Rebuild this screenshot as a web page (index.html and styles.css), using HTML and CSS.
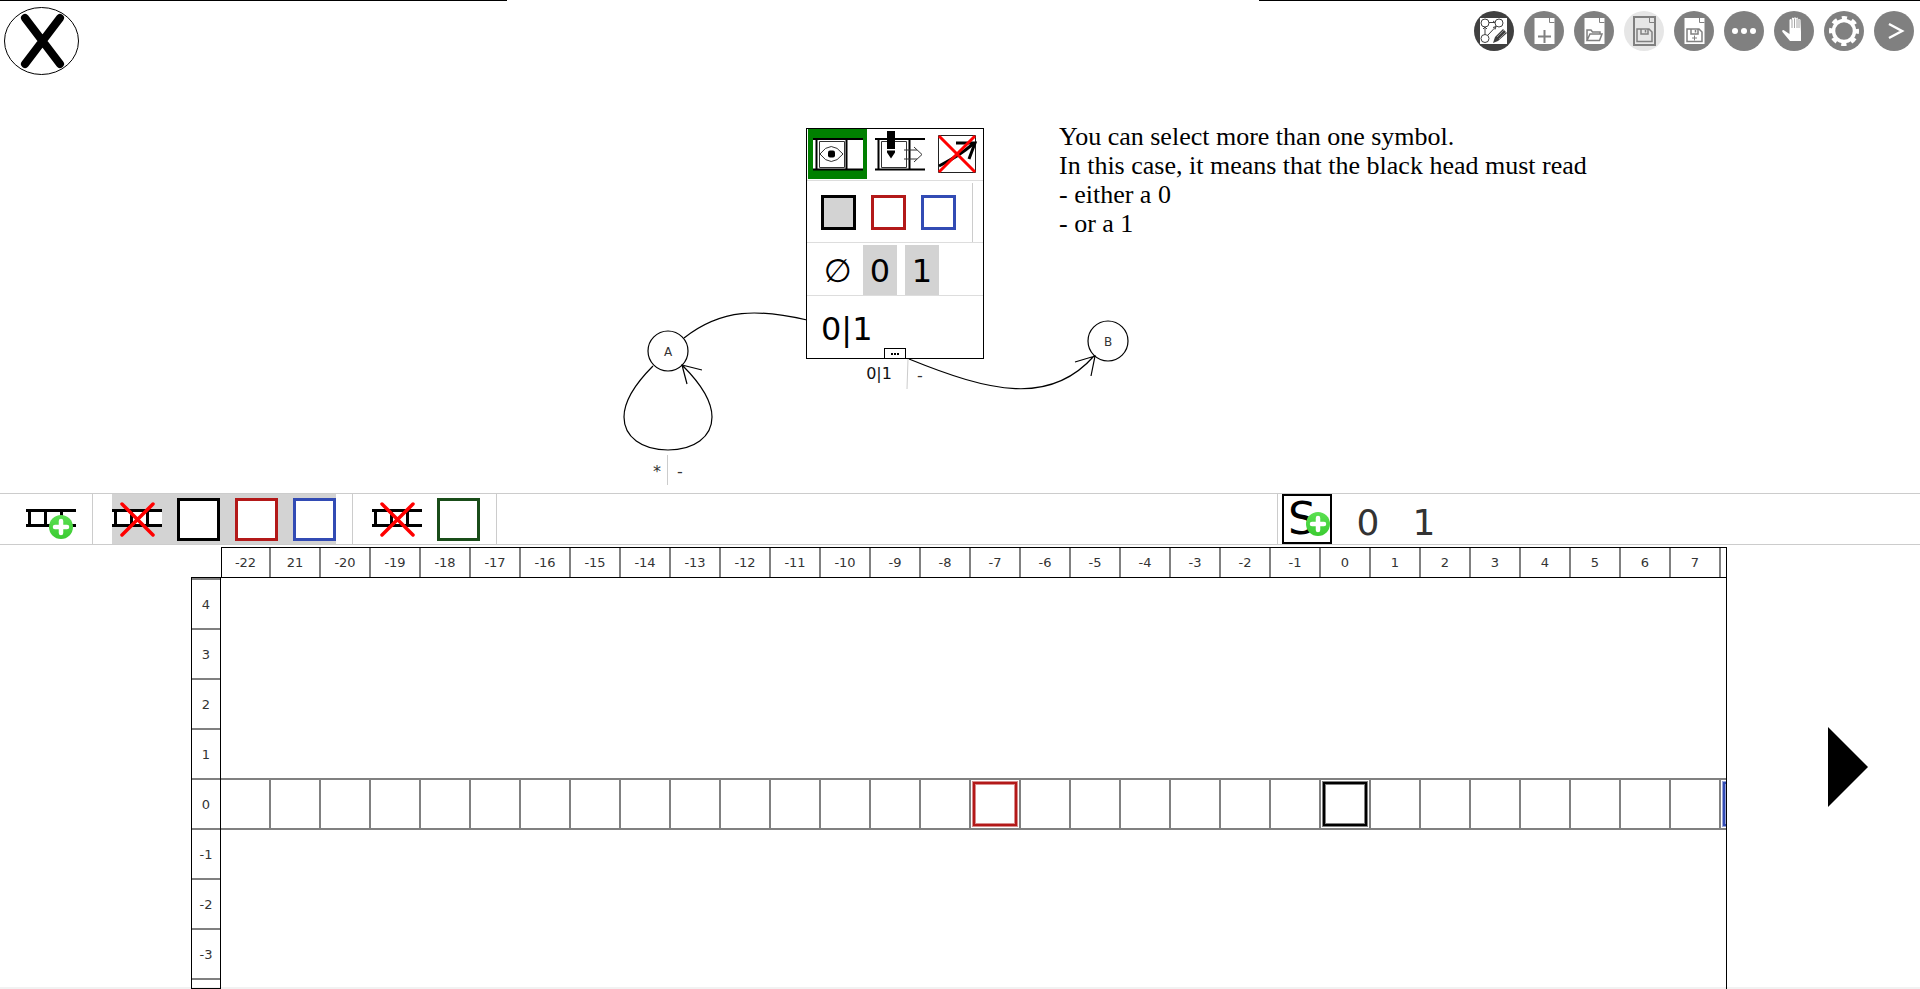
FILE: index.html
```
<!DOCTYPE html>
<html lang="en">
<head>
<meta charset="utf-8">
<title>Turing machine editor</title>
<link rel="stylesheet" href="styles.css">
</head>
<body>
<svg class="defs" width="0" height="0" aria-hidden="true">
  <defs>
    <linearGradient id="green" x1="0" y1="0" x2="0" y2="1"><stop offset="0" stop-color="#5be052"/><stop offset="1" stop-color="#3bcb31"/></linearGradient>
    <symbol id="tape" viewBox="0 0 50 50">
      <path d="M0 15h50v18H0z" fill="#fff"/>
      <path d="M0 16.500h50M0 31.500h50M3.500 16v16M19.500 16v16M35.500 16v16" stroke="#000" stroke-width="3"/>
    </symbol>
    <symbol id="cross" viewBox="0 0 50 50"><path d="M10 10l31 31M41 10L10 41" stroke="#f00" stroke-width="3.500" stroke-linecap="round"/></symbol>
    <symbol id="sheet" viewBox="0 0 40 40">
      <path d="M10.500 7h15l5 5v21h-20z" fill="#fff"/><path d="M25.500 7h5v5h-5z" fill="#fff"/>
      <path d="M25.500 7v4.500h5" fill="none" stroke="#808080"/>
    </symbol>
    <symbol id="floppy" viewBox="0 0 40 40"><path d="M13 18h12l3 3v9.500H13zM17 18v5h7v-5M21.500 19v2.500" fill="none" stroke="#808080" stroke-width="1.500"/></symbol>
  </defs>
</svg>
<main class="page">
  <section class="canvas">
    <div class="edge"><i class="edge-left"></i><i class="edge-right"></i></div>
    <header class="topbar">
      <button class="close" aria-label="Close"><svg width="76" height="69" viewBox="0 0 76 69"><ellipse cx="37.500" cy="34" rx="37" ry="33.500" fill="#fff" stroke="#000"/><path d="M21 11l35 46M56 11L21 57" stroke="#000" stroke-width="8" stroke-linecap="round"/></svg></button>
      <nav class="tools">
        <button class="tool dark" aria-label="Edit graph"><svg viewBox="0 0 40 40"><path d="M6 7h27v26H6z" fill="#fff"/><g fill="none" stroke="#404040"><circle cx="11" cy="12" r="4"/><circle cx="25" cy="12" r="4"/><circle cx="11" cy="27.500" r="4"/><path d="M15 11.500h6l-2-1.500M11 23.500V16l-2 2M11 16l2 2M14 24l8-8.500-3 1M22 15.500l-1 3" /></g><path d="M19 32l2-6 8-8 4 4-9 8z" fill="#404040"/><path d="M23 26l7-7M25 28l7-7" stroke="#aaa" stroke-width=".8"/></svg></button>
        <button class="tool" aria-label="New file"><svg viewBox="0 0 40 40"><use href="#sheet"/><path d="M20.500 19v13M14 25.500h13" stroke="#808080" stroke-width="2"/></svg></button>
        <button class="tool" aria-label="Open file"><svg viewBox="0 0 40 40"><use href="#sheet"/><path d="M13 29.500V19h4l1.500 2H26v2M13 29.500l3-6.500h12l-2.500 6.500z" fill="none" stroke="#808080" stroke-width="1.500"/></svg></button>
        <button class="tool light" aria-label="Save"><svg viewBox="0 0 40 40"><path d="M10 6h21v28H10z" fill="none" stroke="#808080" stroke-width="2"/><path d="M25.500 6v5.500H31" fill="none" stroke="#808080"/><use href="#floppy"/></svg></button>
        <button class="tool" aria-label="Save as"><svg viewBox="0 0 40 40"><use href="#sheet"/><use href="#floppy"/><path d="M20.500 24.500v5M18 27h5" stroke="#808080"/></svg></button>
        <button class="tool" aria-label="More"><svg viewBox="0 0 40 40" fill="#fff"><circle cx="11" cy="20" r="3"/><circle cx="20" cy="20" r="3"/><circle cx="29" cy="20" r="3"/></svg></button>
        <button class="tool" aria-label="Move"><svg viewBox="0 0 40 40"><path d="M16 30l-7.500-9q-1-2 1-2l6 4V9q1-2 2 0l.5-2q1-1 1.500 0l.5 0q1-1.500 2 0l.5 0q1-1 1.500.5l.5 1q1.500-1 2 .5l.5 12V30z" fill="#fff"/><path d="M18 8.500V17M20.500 7.500V17M23 7.500V17M25 8.500V17" stroke="#808080" stroke-width=".7"/></svg></button>
        <button class="tool" aria-label="Settings"><svg viewBox="0 0 40 40"><circle cx="20" cy="20" r="10.500" fill="none" stroke="#fff" stroke-width="3.500"/><circle cx="20" cy="20" r="13" fill="none" stroke="#fff" stroke-width="4" stroke-dasharray="5.200 5.010" stroke-dashoffset="2.600"/></svg></button>
        <button class="tool" aria-label="Expand"><svg viewBox="0 0 40 40"><path d="M15 13l13 7-13 7" fill="none" stroke="#fff" stroke-width="2.500"/></svg></button>
      </nav>
    </header>
    <svg class="graph" role="img" aria-label="Transition graph">
      <g fill="none" stroke="#000" stroke-width="1.200">
        <circle cx="668" cy="351" r="20"/><circle cx="1108" cy="341" r="20"/>
        <path d="M684 338C722 308 759 309 807 320M909 359C990 392 1050 406 1094 356M1075 362l20-6-4 20"/>
        <path d="M653 366C634 385 624 401 624 417C624 437 642 450 668 450C694 450 712 437 712 417C712 401 702 385 683 366M702 370l-20-5 5 19"/>
      </g>
      <path d="M667.500 455v30M908 359l-1 30" stroke="#ccc"/>
      <g class="graph-text">
        <text x="668" y="356">A</text><text x="1108" y="346">B</text>
        <text x="657" y="477" class="mark">*</text><text x="680" y="477" class="mark">-</text><text x="920" y="381" class="mark">-</text>
        <text x="879" y="379" class="mark strong">0|1</text>
      </g>
    </svg>
    <p class="hint">You can select more than one symbol.<br>In this case, it means that the black head must read<br>- either a 0<br>- or a 1</p>
    <div class="panel">
      <div class="row modes">
        <button class="mode active" aria-label="Read"><svg viewBox="0 0 50 50"><path d="M0 10h50v31H0z" fill="#fff"/><path d="M0 10h50M0 40.500h50M3.500 10v30M33.500 10v30" stroke="#000" stroke-width="2"/><path d="M6.500 12.500h25v26h-25z" fill="none" stroke="#333"/><path d="M7 25q11-15 23 0q-12 15-23 0z" fill="none" stroke="#333"/><rect x="15" y="21.500" width="7" height="7" rx="2"/></svg></button>
        <button class="mode" aria-label="Write and move"><svg viewBox="0 0 50 50"><path d="M0 10h50M0 40.500h50M3.500 10v30M34.500 10v30" stroke="#000" stroke-width="2"/><path d="M6.500 12.500h25v26h-25z" fill="none" stroke="#333"/><path d="M12 2h8v18h-8zM12 21.500h8v2l-4 6-4-6z"/><path d="M29 21h13M29 30h13M39 18l8 7.500-8 7.500" fill="none" stroke="#333"/></svg></button>
        <button class="mode narrow" aria-label="Remove transition"><svg viewBox="0 0 50 50"><path d="M6.500 6.500h37v37h-37z" fill="none" stroke="#222"/><path d="M7 37q20-10 34-22" fill="none" stroke="#000" stroke-width="3"/><path d="M24 14h19l-6 16" fill="none" stroke="#000" stroke-width="3"/><path d="M7 7l36 36M43 7L7 43" stroke="#f00" stroke-width="3"/></svg></button>
      </div>
      <div class="row heads">
        <button class="head black picked" aria-label="Black head"></button><button class="head red" aria-label="Red head"></button><button class="head blue" aria-label="Blue head"></button>
      </div>
      <div class="row symbols"><button class="symbol">∅</button><button class="symbol picked">0</button><button class="symbol picked">1</button></div>
      <div class="row result"><output>0|1</output></div>
      <button class="more" aria-label="More options"><svg width="8" height="2" viewBox="0 0 8 2"><path d="M0 0h2v2H0zM3 0h2v2H3zM6 0h2v2H6z"/></svg></button>
    </div>
  </section>

  <section class="midbar">
    <div class="group add"><button class="icon" aria-label="Add tape"><svg viewBox="0 0 50 50"><use href="#tape"/><circle cx="35" cy="33" r="12" fill="url(#green)"/><path d="M35 27v12M29 33h12" stroke="#fff" stroke-width="4.500" stroke-linecap="round"/></svg></button></div>
    <div class="group">
      <div class="tapeset selected"><button class="icon" aria-label="Delete tape 1"><svg viewBox="0 0 50 50"><use href="#tape"/><use href="#cross"/></svg></button><button class="head big black" aria-label="Black head"></button><button class="head big red" aria-label="Red head"></button><button class="head big blue" aria-label="Blue head"></button></div>
    </div>
    <div class="group">
      <div class="tapeset"><button class="icon" aria-label="Delete tape 2"><svg viewBox="0 0 50 50"><use href="#tape"/><use href="#cross"/></svg></button><button class="head big green" aria-label="Green head"></button></div>
    </div>
    <div class="alphabet">
      <button class="icon" aria-label="Add symbol"><svg viewBox="0 0 50 50"><path d="M1 1h48v48H1z" fill="#fff" stroke="#000" stroke-width="2"/><text x="6" y="40" class="s-glyph">S</text><circle cx="36" cy="30" r="12" fill="url(#green)"/><path d="M36 24v12M30 30h12" stroke="#fff" stroke-width="4.500" stroke-linecap="round"/></svg></button>
      <button class="letter">0</button><button class="letter">1</button>
    </div>
  </section>

  <section class="workspace">
    <div class="ruler-x">
      <span>-22</span><span>21</span><span>-20</span><span>-19</span><span>-18</span><span>-17</span><span>-16</span><span>-15</span><span>-14</span><span>-13</span><span>-12</span><span>-11</span><span>-10</span><span>-9</span><span>-8</span><span>-7</span><span>-6</span><span>-5</span><span>-4</span><span>-3</span><span>-2</span><span>-1</span><span>0</span><span>1</span><span>2</span><span>3</span><span>4</span><span>5</span><span>6</span><span>7</span><span></span>
    </div>
    <div class="ruler-y"><span>4</span><span>3</span><span>2</span><span>1</span><span>0</span><span>-1</span><span>-2</span><span>-3</span><span></span></div>
    <div class="tapes">
      <div class="tape">
        <i></i><i></i><i></i><i></i><i></i><i></i><i></i><i></i><i></i><i></i><i></i><i></i><i></i><i></i><i></i><i><b class="marker red"></b></i><i></i><i></i><i></i><i></i><i></i><i></i><i><b class="marker black"></b></i><i></i><i></i><i></i><i></i><i></i><i></i><i></i><i><b class="marker blue"></b></i>
      </div>
    </div>
    <div class="player"><button class="play" aria-label="Play"><svg width="40" height="80" viewBox="0 0 40 80"><path d="M0 0l40 40L0 80z"/></svg></button></div>
  </section>
</main>
</body>
</html>
```

FILE: styles.css
```
* { box-sizing: border-box; }
body { margin: 0; background: #fff; color: #000; font-family: "DejaVu Sans", sans-serif; }
button { margin: 0; padding: 0; border: 0; background: none; color: inherit; font: inherit; }
svg { display: block; }
.defs { position: absolute; }
.page { display: grid; grid-template-rows: minmax(0, 493fr) 52px minmax(0, 444fr); height: 100vh; min-height: 800px; overflow: hidden; }

/* Graph canvas */
.canvas { position: relative; overflow: hidden; }
.edge { display: flex; justify-content: space-between; height: 1px; }
.edge i { background: #000; }
.edge-left { width: 507px; }
.edge-right { width: 661px; }
.topbar { display: flex; justify-content: space-between; align-items: flex-start; padding: 6px 6px 0 4px; }
.tools { display: flex; gap: 10px; padding-top: 4px; }
.tool { width: 40px; height: 40px; border-radius: 50%; background: #808080; }
.tool.dark { background: #404040; }
.tool.light { background: #e6e6e6; }
.graph { position: absolute; left: 0; top: 0; width: 100%; height: 100%; pointer-events: none; }
.graph-text { font-size: 12px; text-anchor: middle; fill: #333; }
.mark { font-size: 16px; }
.strong { fill: #111; }
.hint { position: absolute; left: 1059px; top: 122px; margin: 0; font-family: "Liberation Serif", serif; font-size: 26px; line-height: 29px; }

/* Transition panel */
.panel { position: absolute; left: 806px; top: 128px; width: 178px; border: 1px solid #000; background: #fff; }
.row { display: flex; border-bottom: 1px solid #ddd; }
.modes { height: 52px; gap: 3px; padding-left: 1px; }
.mode { flex: none; display: grid; place-items: center; width: 59px; height: 50px; }
.mode.narrow { width: 50px; }
.mode.active { background: #008000; }
.mode svg { width: 50px; height: 50px; }
.heads { height: 62px; align-items: center; gap: 15px; padding: 2px 0 0 14px; }
.heads::after { content: ""; align-self: stretch; margin-left: 1px; border-right: 1px solid #ccc; }
.head { width: 35px; height: 35px; border: 3px solid; }
.head.picked { background: #d3d3d3; }
.symbols { height: 53px; gap: 8px; padding: 2px 0 0 14px; }
.symbol { width: 34px; height: 50px; padding-top: 2px; font-size: 32px; line-height: 48px; }
.symbol.picked { background: #d3d3d3; }
.result { height: 62px; padding: 14px 0 0 14px; border: 0; font-size: 32px; line-height: 38px; }
.more { position: absolute; left: 77px; bottom: -1px; display: grid; place-items: center; width: 22px; height: 11px; border: 1px solid #000; background: #fff; }

/* Tape and alphabet bar */
.midbar { display: flex; border-top: 1px solid #ccc; border-bottom: 1px solid #ccc; }
.group { border-right: 1px solid #ccc; padding: 0 16px 0 19px; }
.group.add { padding: 0 16px 0 26px; }
.icon, .icon svg { width: 50px; height: 50px; }
.tapeset { display: flex; align-items: center; gap: 15px; height: 50px; }
.selected { background: #d3d3d3; }
.head.big { width: 43px; height: 43px; background: #fff; }
.alphabet { display: flex; flex: 0 0 643px; align-items: center; margin-left: auto; padding-left: 4px; border-left: 1px solid #ccc; color: #333; }
.letter { width: 24px; margin-left: 32px; padding-top: 8px; font-size: 36px; line-height: 42px; }
.icon + .letter { margin-left: 24px; }
.s-glyph { font-size: 44px; fill: #000; }

/* Rulers and tapes */
.workspace { display: grid; grid-template: 31px 1fr / 30px 1fr 193px; padding: 2px 0 0 191px; border-bottom: 2px solid #f2f2f2; font-size: 13px; color: #333; }
.workspace > * { min-width: 0; min-height: 0; }
.ruler-x { grid-area: 1 / 2; display: flex; border: 1px solid #000; overflow: hidden; }
.ruler-x span { flex: 0 0 50px; display: grid; place-items: center; border-right: 2px solid #808080; }
.ruler-x span:first-child { flex-basis: 49px; }
.ruler-y { grid-area: 2 / 1; margin: -1px 0 -2px; border: 1px solid #000; overflow: hidden; display: flex; flex-direction: column; }
.ruler-y span { flex: 0 0 50px; display: grid; place-items: center; border-bottom: 2px solid #808080; }
.ruler-y span:first-child { flex-basis: 52px; border-top: 2px solid #808080; }
.tapes { grid-area: 2 / 2; display: flex; align-items: flex-start; margin-bottom: -2px; padding-top: 200px; border-right: 1px solid #000; overflow: hidden; }
.tape { display: flex; height: 52px; border: solid #808080; border-width: 2px 0; }
.tape i { flex: 0 0 50px; display: grid; place-items: center; border-right: 2px solid #808080; }
.tape i:first-child { flex-basis: 50px; }
.marker { width: 44px; height: 44px; border: 2px solid; box-shadow: 0 0 0 1px var(--halo), inset 0 0 0 1px var(--halo); }
.black { --halo: #808080; border-color: #000; }
.red { --halo: #d98c8c; border-color: #b31919; }
.blue { --halo: #98a5d9; border-color: #324bb4; }
.green { border-color: #194d19; }
.player { grid-area: 1 / 3 / 3 / 4; display: flex; align-items: center; padding-left: 101px; }
```
